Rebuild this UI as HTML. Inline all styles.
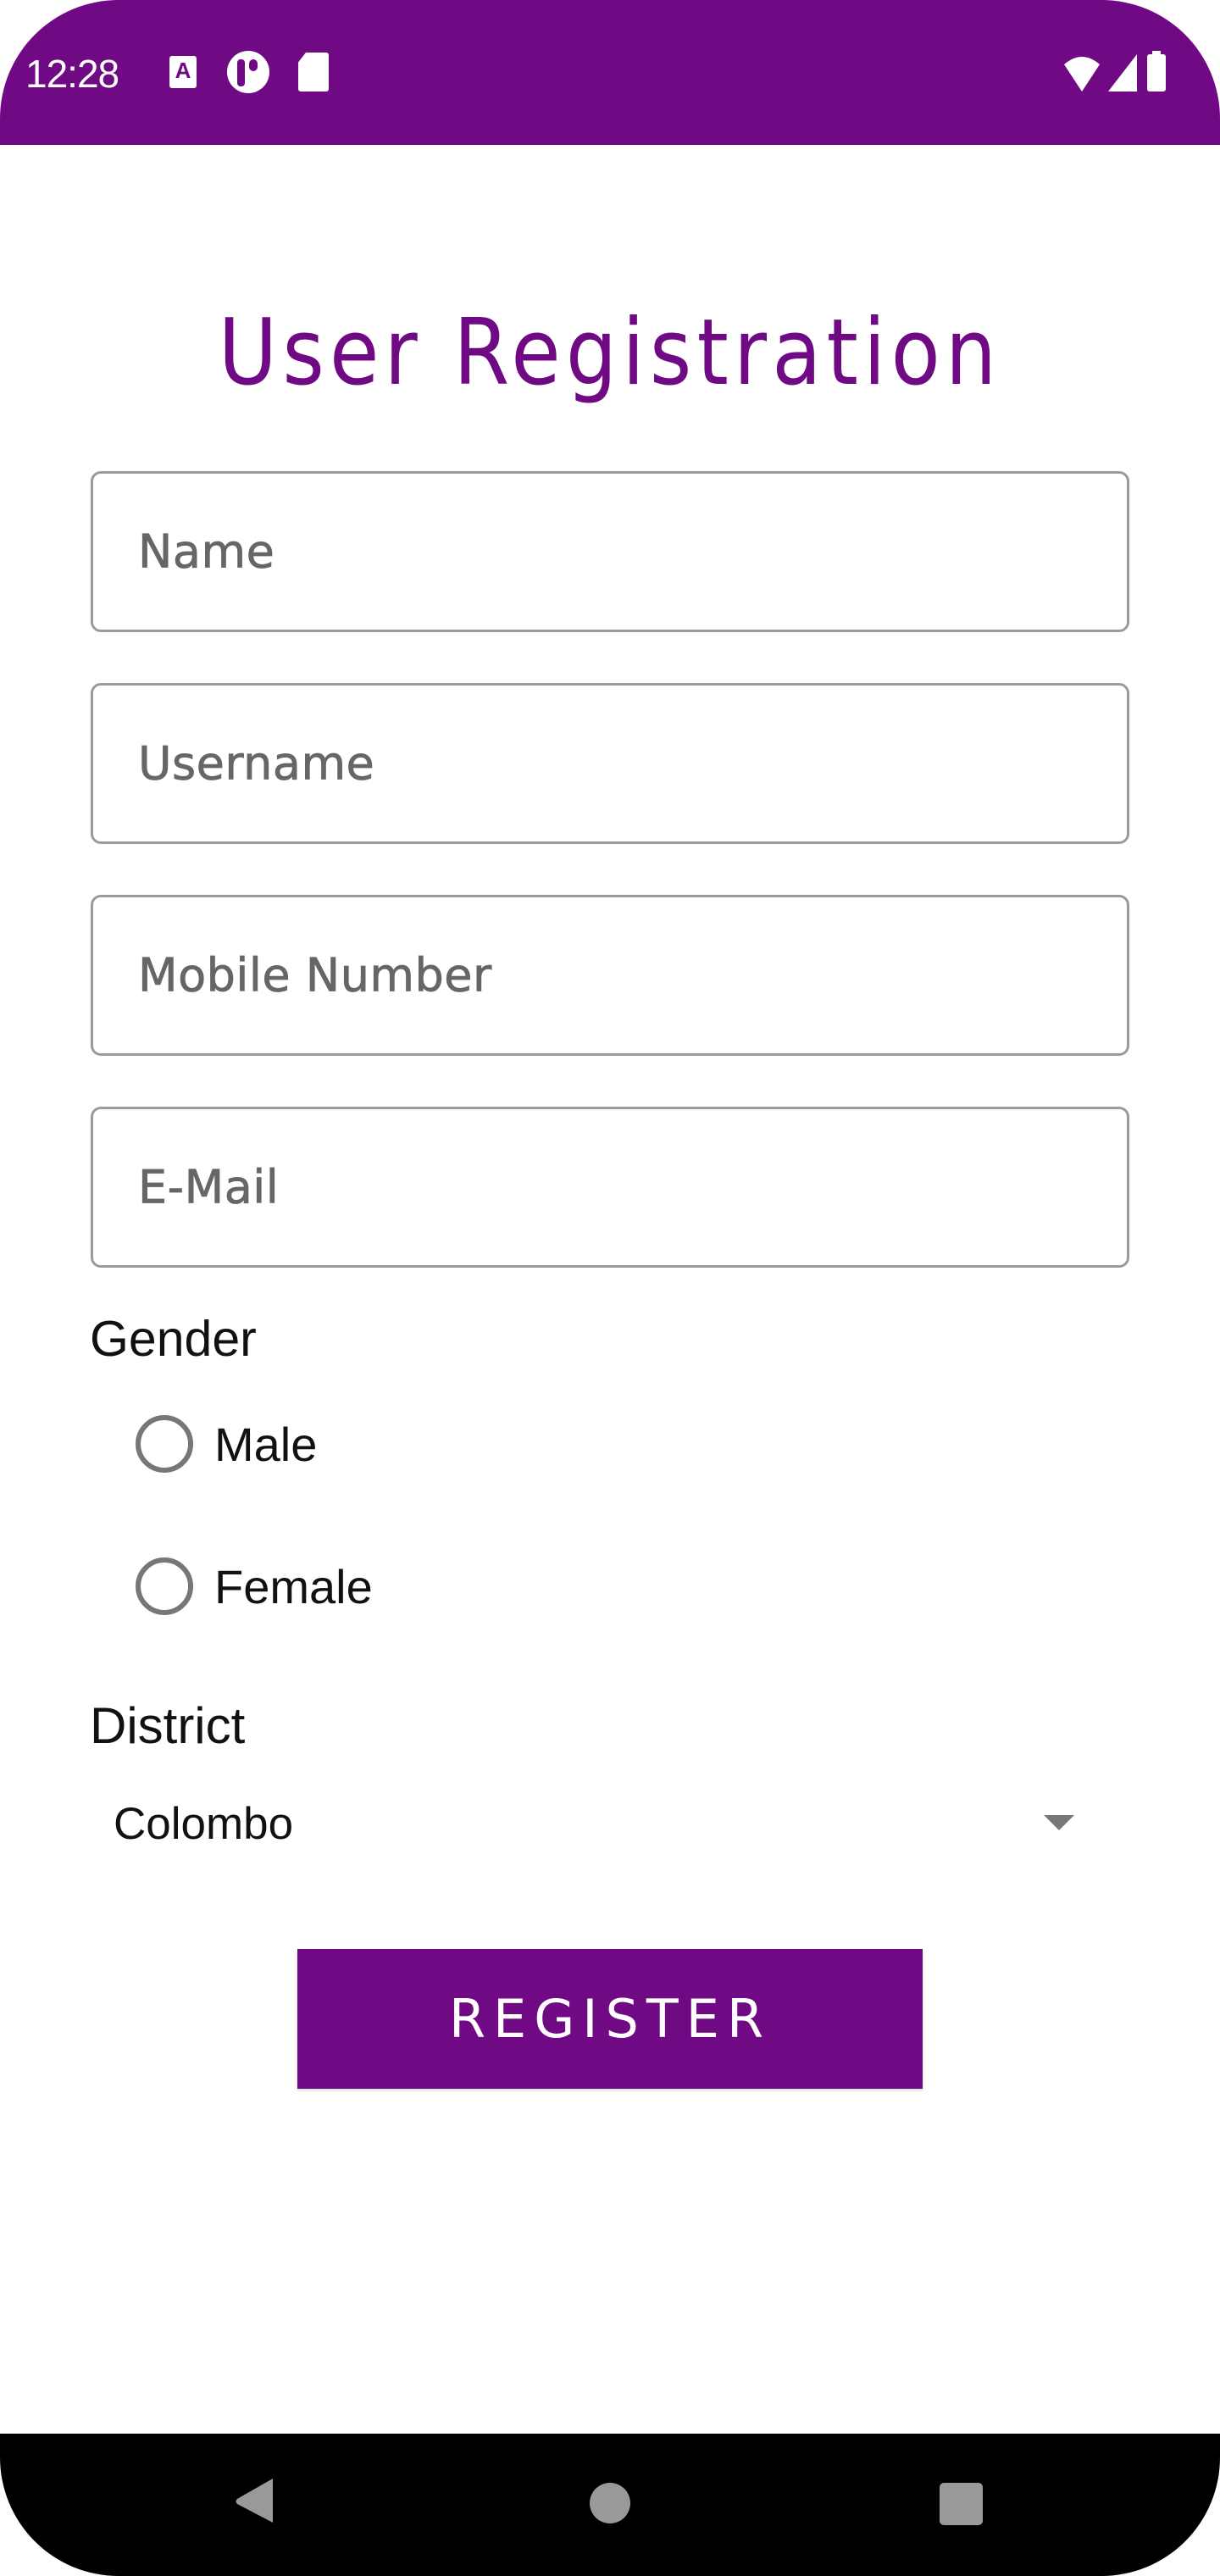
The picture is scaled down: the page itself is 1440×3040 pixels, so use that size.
<!DOCTYPE html>
<html><head><meta charset="utf-8"><style>
*{margin:0;padding:0;box-sizing:border-box}
body{width:1440px;height:3040px;background:#fff;position:relative;overflow:hidden;font-family:"Liberation Sans","DejaVu Sans",sans-serif}
.abs{position:absolute}
#status{left:0;top:0;width:1440px;height:171px;background:#6f0a84;border-radius:140px 140px 0 0}
.field{position:absolute;left:107px;width:1226px;height:190px;border:3px solid #9a9a9a;border-radius:12px}
.field span{position:absolute;left:53px;top:50%;transform:translateY(-50%);font-family:"DejaVu Sans",sans-serif;font-size:54px;color:#666;letter-spacing:0.5px;-webkit-text-stroke:0.8px #666}
.radio{position:absolute;left:160px;width:68px;height:68px;border:6px solid #777;border-radius:50%}
.lbl{position:absolute;font-size:56px;color:#111}
#nav{left:0;top:2872px;width:1440px;height:168px;background:#000;border-radius:0 0 140px 140px}
</style></head><body>
<div id="status" class="abs"></div>
<div class="abs" style="left:30px;top:60px;font-size:46px;color:#fff;letter-spacing:-1px">12:28</div>
<div class="abs" style="left:200px;top:66px;width:32px;height:38px;background:#fff;border-radius:3px;color:#6f0a84;font-size:26px;font-weight:bold;text-align:center;line-height:34px">A</div>
<div class="abs" style="left:268px;top:60px;width:50px;height:50px;background:#fff;border-radius:50%"></div>
<div class="abs" style="left:280px;top:70px;width:9px;height:32px;background:#6f0a84;border-radius:4px"></div>
<div class="abs" style="left:294px;top:70px;width:10px;height:14px;background:#6f0a84;border-radius:5px"></div>
<div class="abs" style="left:352px;top:62px;width:36px;height:46px;background:#fff;border-radius:3px;clip-path:polygon(25% 0,100% 0,100% 100%,0 100%,0 25%)"></div>
<svg class="abs" style="left:1250px;top:58px" width="150" height="56"><path d="M6 18 Q27 0 48 18 L27 50 Z" fill="#fff"/><path d="M58 50 L92 6 L92 50 Z" fill="#fff"/><rect x="104" y="6" width="22" height="44" rx="3" fill="#fff"/><rect x="110" y="2" width="10" height="6" fill="#fff"/></svg>

<div class="abs" style="left:0;width:1440px;top:352px;text-align:center;font-family:'DejaVu Sans',sans-serif;font-size:108px;color:#6f0a84;letter-spacing:7px;line-height:130px;transform:scaleX(0.88)">User Registration</div>

<div class="field" style="top:556px"><span>Name</span></div>
<div class="field" style="top:806px"><span>Username</span></div>
<div class="field" style="top:1056px"><span>Mobile Number</span></div>
<div class="field" style="top:1306px"><span>E-Mail</span></div>

<div class="lbl" style="left:106px;top:1546px;font-size:59px">Gender</div>
<div class="radio" style="top:1670px"></div>
<div class="lbl" style="left:253px;top:1672px">Male</div>
<div class="radio" style="top:1838px"></div>
<div class="lbl" style="left:253px;top:1840px">Female</div>

<div class="lbl" style="left:106px;top:2002px;font-size:60px">District</div>
<div class="lbl" style="left:134px;top:2122px;font-size:53px">Colombo</div>
<svg class="abs" style="left:1232px;top:2142px" width="36" height="20"><path d="M0 0 L36 0 L18 18 Z" fill="#777"/></svg>

<div class="abs" style="left:351px;top:2300px;width:738px;height:165px;background:#6f0a84;box-shadow:0 2px 4px rgba(0,0,0,.15);color:#fff;text-align:center;line-height:165px;font-family:'DejaVu Sans',sans-serif;font-size:62px;letter-spacing:9px">REGISTER</div>

<div id="nav" class="abs"></div>
<svg class="abs" style="left:0;top:2872px" width="1440" height="168"><path d="M322 53 L322 105 L280 83 Q277 80 280 77 Z" fill="#999"/><circle cx="720" cy="82" r="24" fill="#999"/><rect x="1109" y="58" width="51" height="50" rx="5" fill="#999"/></svg>
</body></html>
